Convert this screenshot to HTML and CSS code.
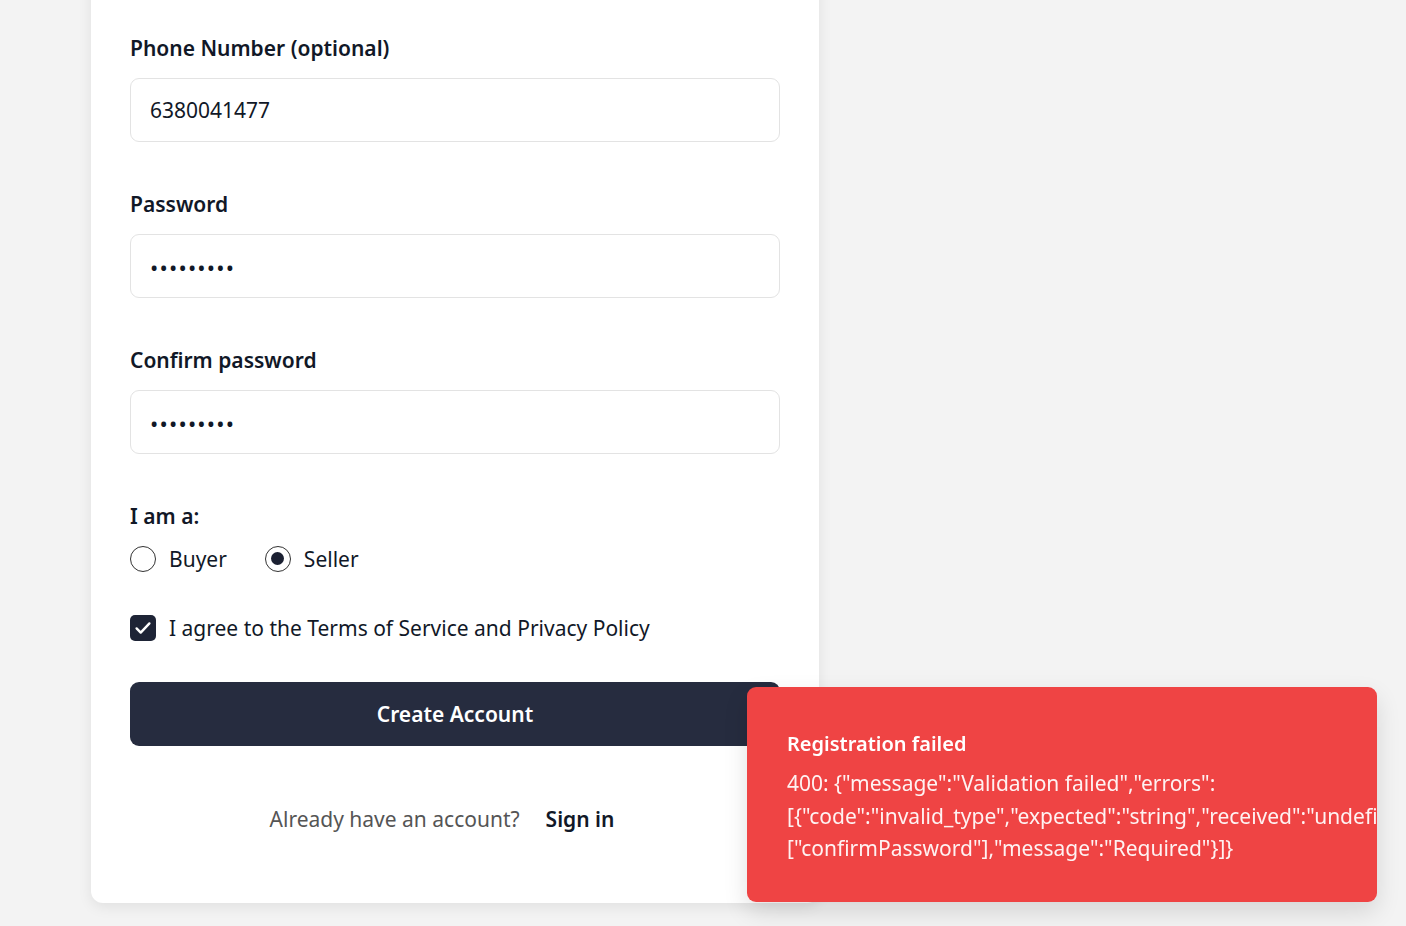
FILE: index.html
```html
<!DOCTYPE html>
<html lang="en">
<head>
<meta charset="utf-8">
<title>Create Account</title>
<link rel="stylesheet" href="styles.css">
</head>
<body>
<main class="page">
  <form class="card">
    <div class="field">
      <label class="label">Phone Number (optional)</label>
      <div class="input">6380041477</div>
    </div>
    <div class="field">
      <label class="label">Password</label>
      <div class="input dots">•••••••••</div>
    </div>
    <div class="field">
      <label class="label">Confirm password</label>
      <div class="input dots">•••••••••</div>
    </div>
    <div class="role">
      <div class="label">I am a:</div>
      <div class="radios">
        <span class="opt"><span class="radio"></span>Buyer</span>
        <span class="opt"><span class="radio on"></span>Seller</span>
      </div>
    </div>
    <div class="agree">
      <span class="check"><svg viewBox="0 0 24 24" width="22" height="22"><path d="M5 12.5l4.5 4.5L19 7" fill="none" stroke="#fff" stroke-width="2.6" stroke-linecap="round" stroke-linejoin="round"/></svg></span>
      I agree to the Terms of Service and Privacy Policy
    </div>
    <div class="btn">Create Account</div>
    <div class="signin">
      <span class="muted">Already have an account?</span>
      <span class="link">Sign in</span>
    </div>
  </form>
</main>
<div class="toast">
  <div class="toast-title">Registration failed</div>
  <div class="toast-body">400: {"message":"Validation failed","errors":[{"code":"invalid_type","expected":"string","received":"undefined","path":["confirmPassword"],"message":"Required"}]}</div>
</div>
</body>
</html>
```
FILE: styles.css
```css
* { box-sizing: border-box; }
html, body { margin: 0; height: 100%; overflow: hidden; }
body {
  background: #f3f3f3;
  font-family: "Noto Sans", "Open Sans", sans-serif;
  color: #111827;
  font-size: 21px;
}
.page { padding-left: 91px; }
.card {
  width: 728px;
  margin-top: -30px;
  background: #fff;
  border-radius: 12px;
  box-shadow: 0 4px 14px rgba(0,0,0,0.08);
  padding: 64px 39px 69px;
  display: flex;
  flex-direction: column;
}
.field { display: flex; flex-direction: column; margin-bottom: 48px; }
.label { font-weight: 600; line-height: 28px; height: 28px; margin-bottom: 16px; font-size: 21px; }
.input {
  height: 64px;
  border: 1px solid #e3e3e3;
  border-radius: 9px;
  padding: 0 19px;
  display: flex;
  align-items: center;
  font-size: 21px;
}
.dots { font-size: 22px; letter-spacing: 1.2px; padding-top: 2px; }
.role .label { margin-bottom: 15px; }
.radios { display: flex; gap: 38px; height: 28px; align-items: center; }
.opt { display: flex; align-items: center; gap: 13px; }
.radio {
  width: 26px; height: 26px; border-radius: 50%;
  border: 1.5px solid #333;
  display: inline-block; position: relative;
}
.radio.on::after {
  content: ""; position: absolute; left: 5px; top: 5px;
  width: 13px; height: 13px; border-radius: 50%; background: #1b2032;
}
.agree { display: flex; align-items: center; gap: 13px; margin-top: 41px; height: 28px; }
.check {
  width: 26px; height: 26px; border-radius: 5px; background: #1e2436;
  display: flex; align-items: center; justify-content: center;
}
.btn {
  margin-top: 40px;
  height: 64px;
  border-radius: 9px;
  background: #262c3f;
  color: #fff;
  font-weight: 600;
  display: flex; align-items: center; justify-content: center;
}
.signin {
  margin-top: 58px;
  display: flex; justify-content: center; gap: 26px;
  line-height: 30px;
}
.muted { color: #555; }
.link { font-weight: 600; color: #111827; padding-right: 26px; }
.toast {
  position: fixed;
  right: 29px; bottom: 24px;
  width: 630px; height: 215px;
  background: #ef4444;
  color: #fff;
  border-radius: 9px;
  padding: 42px 40px 0;
  overflow: hidden;
  box-shadow: 0 10px 25px rgba(0,0,0,0.12);
}
.toast-title { font-weight: 600; font-size: 20px; line-height: 30px; margin-bottom: 8px; }
.toast-body { font-size: 21px; line-height: 32.5px; color: #fef2f2; }
```
